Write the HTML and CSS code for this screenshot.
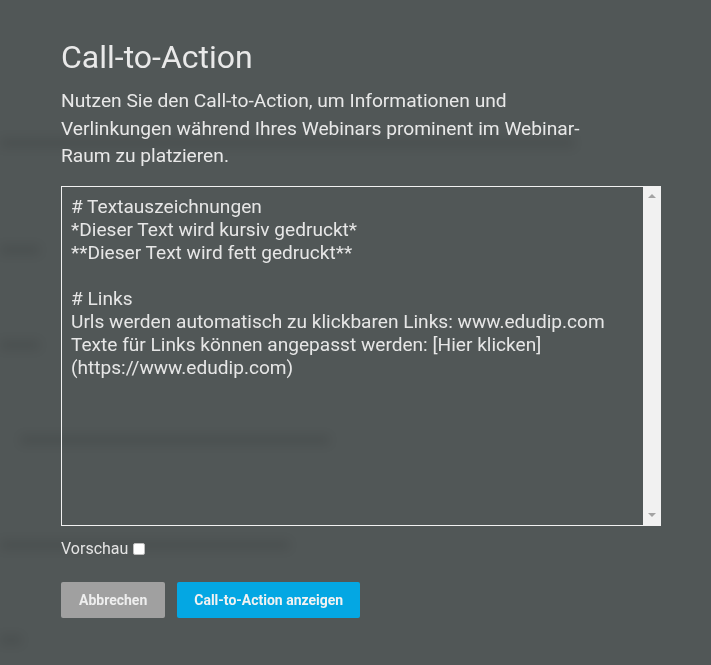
FILE: index.html
```html
<!DOCTYPE html>
<html lang="de">
<head>
<meta charset="utf-8">
<title>Call-to-Action</title>
<link rel="stylesheet" href="styles.css">
</head>
<body>
<div class="backdrop" aria-hidden="true">
  <div class="ghost g1"></div>
  <div class="ghost g2"></div>
  <div class="ghost g3"></div>
  <div class="ghost g4"></div>
  <div class="ghost g5"></div>
  <div class="ghost g6"></div>
</div>
<main class="modal">
  <h1 class="title">Call-to-Action</h1>
  <p class="intro">Nutzen Sie den Call-to-Action, um Informationen und Verlinkungen während Ihres Webinars prominent im Webinar-Raum zu platzieren.</p>
  <div class="editor">
    <textarea class="field" spellcheck="false"># Textauszeichnungen
*Dieser Text wird kursiv gedruckt*
**Dieser Text wird fett gedruckt**

# Links
Urls werden automatisch zu klickbaren Links: www.edudip.com
Texte für Links können angepasst werden: [Hier klicken]
(https://www.edudip.com)</textarea>
    <div class="scrollbar">
      <span class="arrow up"></span>
      <span class="arrow down"></span>
    </div>
  </div>
  <label class="preview">Vorschau <input type="checkbox" class="check"></label>
  <div class="actions">
    <button class="btn btn-cancel">Abbrechen</button>
    <button class="btn btn-primary">Call-to-Action anzeigen</button>
  </div>
</main>
</body>
</html>
```
FILE: styles.css
```css
* { box-sizing: border-box; }
html, body {
  margin: 0;
  height: 100%;
}
body {
  background: #515757;
  font-family: Roboto, "Liberation Sans", sans-serif;
  color: #e8e8e8;
  overflow: hidden;
  position: relative;
}
.backdrop {
  position: fixed;
  inset: 0;
  display: flex;
  flex-direction: column;
  padding-top: 138px;
  filter: blur(5px);
}
.ghost {
  height: 10px;
  background: rgba(0, 0, 0, 0.07);
  border-radius: 5px;
}
.g1 { width: 575px; }
.g2 { width: 40px; margin-top: 97px; }
.g3 { width: 40px; margin-top: 85px; }
.g4 { width: 310px; margin-left: 20px; margin-top: 85px; }
.g5 { width: 290px; margin-top: 95px; }
.g6 { width: 22px; margin-top: 85px; }

.modal {
  position: relative;
  padding: 38px 0 0 61px;
  width: 661px;
}
.title {
  margin: 0;
  font-size: 32px;
  line-height: 38px;
  font-weight: 400;
  color: #e9e9e9;
}
.intro {
  margin: 11px 0 0;
  max-width: 540px;
  font-size: 19.2px;
  line-height: 27.5px;
  color: #e8e8e8;
}
.editor {
  margin-top: 16px;
  display: flex;
  width: 600px;
  height: 340px;
}
.field {
  flex: 1;
  height: 100%;
  margin: 0;
  padding: 8px 9px;
  border: 1px solid #f2f2f2;
  border-right: none;
  background: transparent;
  color: #e6e6e6;
  font-family: Roboto, "Liberation Sans", sans-serif;
  font-size: 19.1px;
  line-height: 23px;
  resize: none;
  overflow: hidden;
  outline: none;
}
.scrollbar {
  width: 18px;
  height: 100%;
  background: #f1f1f1;
  display: flex;
  flex-direction: column;
  justify-content: space-between;
  align-items: center;
  padding: 8px 0 9px;
}
.arrow {
  width: 0;
  height: 0;
  border-left: 4px solid transparent;
  border-right: 4px solid transparent;
}
.arrow.up { border-bottom: 4px solid #a3a3a3; }
.arrow.down { border-top: 4px solid #a3a3a3; }

.preview {
  display: flex;
  align-items: center;
  gap: 5px;
  margin-top: 13px;
  font-size: 16px;
  line-height: 20px;
  color: #e4e4e4;
}
.check {
  appearance: none;
  -webkit-appearance: none;
  margin: 1px 0 0;
  width: 12px;
  height: 12px;
  background: #fff;
  border: 1px solid #bdbdbd;
  border-radius: 2px;
}
.actions {
  display: flex;
  gap: 12px;
  margin-top: 23px;
}
.btn {
  height: 36px;
  padding: 0 18px;
  border: none;
  border-radius: 2px;
  font-family: Roboto, "Liberation Sans", sans-serif;
  font-size: 14px;
  font-weight: 700;
  color: #eeeeee;
}
.btn-cancel { background: #a0a0a0; }
.btn-primary { background: #04a7e3; color: #f2f2f2; padding: 0 17px; }
```
